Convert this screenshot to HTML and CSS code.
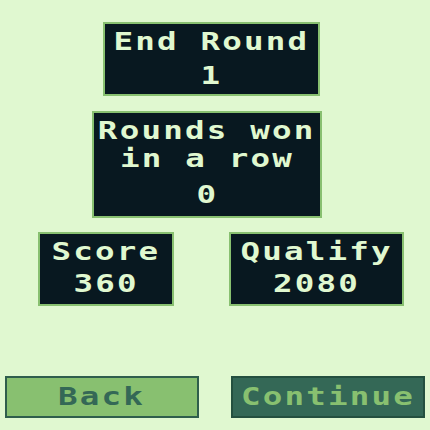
FILE: index.html
```html
<!DOCTYPE html>
<html lang="en">
<head>
    <meta charset="UTF-8">
    <title>End Round</title>
    <link rel="stylesheet" href="styles.css">
</head>
<body>

<div class="screen">
    <div class="panel panel-round">
        <div class="label"><span>End Round</span></div>
        <div class="value"><span>1</span></div>
    </div>

    <div class="panel panel-streak">
        <div class="label"><span>Rounds won</span></div>
        <div class="label"><span>in a row</span></div>
        <div class="value"><span>0</span></div>
    </div>

    <div class="score-row">
        <div class="panel panel-score">
            <div class="label"><span>Score</span></div>
            <div class="value"><span>360</span></div>
        </div>
        <div class="panel panel-qualify">
            <div class="label"><span>Qualify</span></div>
            <div class="value"><span>2080</span></div>
        </div>
    </div>

    <div class="buttons">
        <button class="btn btn-back"><span>Back</span></button>
        <button class="btn btn-continue"><span>Continue</span></button>
    </div>
</div>

</body>
</html>
```

FILE: styles.css
```css
body {
    margin: 0;
    background-color: #e0f8d0;
    font-family: "DejaVu Sans Mono", "Liberation Mono", monospace;
    font-weight: bold;
    font-size: 25px;
}
.screen {
    width: 430px;
    height: 430px;
    padding-top: 22px;
    box-sizing: border-box;
    display: flex;
    flex-direction: column;
    align-items: flex-start;
}
.panel {
    box-sizing: border-box;
    background-color: #081820;
    border: 2px solid #88c070;
    color: #e0f8d0;
    padding: 4px 0;
    text-align: center;
}
.label, .value {
    line-height: 28px;
    height: 28px;
}
.label span, .value span, .btn span {
    display: inline-block;
    letter-spacing: 1.7px;
    transform: scaleX(1.3);
}
.value {
    margin-top: 6px;
}
.panel-round {
    width: 217px;
    margin-left: 103px;
}
.panel-streak {
    width: 230px;
    margin-left: 92px;
    margin-top: 15px;
    padding-bottom: 7px;
}
.panel-streak .value {
    margin-top: 8px;
}
.score-row {
    display: flex;
    gap: 55px;
    margin-left: 38px;
    margin-top: 14px;
}
.panel-score, .panel-qualify {
    padding-bottom: 6px;
}
.panel-score .value, .panel-qualify .value {
    margin-top: 4px;
}
.panel-score {
    width: 136px;
}
.panel-qualify {
    width: 175px;
}
.buttons {
    display: flex;
    gap: 32px;
    margin-left: 5px;
    margin-top: 70px;
}
.btn {
    width: 194px;
    height: 42px;
    box-sizing: border-box;
    border: 2px solid #2f5e4c;
    font-family: inherit;
    font-weight: bold;
    font-size: 25px;
    padding: 0;
    line-height: 36px;
    cursor: pointer;
}
.btn-back {
    background-color: #88c070;
    color: #346856;
}
.btn-continue {
    background-color: #346856;
    border-color: #24503f;
    color: #88c070;
}
```
